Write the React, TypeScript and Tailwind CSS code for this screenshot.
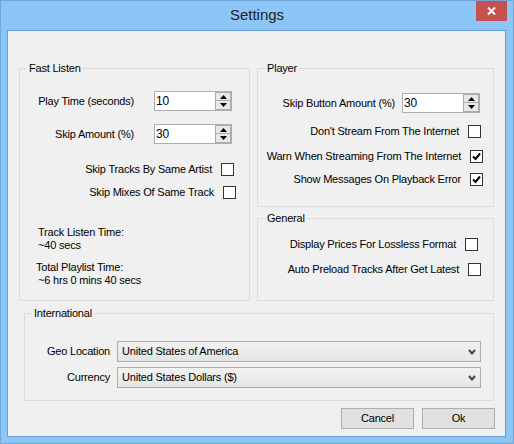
import React from 'react';

function CheckBox({ checked = false }: { checked?: boolean }) {
  return (
    <span className="flex h-[13px] w-[13px] shrink-0 items-center justify-center border border-[#333333] bg-white">
      {checked && (
        <svg width="11" height="11" viewBox="0 0 11 11">
          <path d="M2 5.5 L4.5 8 L9 2.5" fill="none" stroke="#000" strokeWidth="2" />
        </svg>
      )}
    </span>
  );
}

function SpinBox({ value }: { value: string }) {
  return (
    <div className="flex h-[20px] w-[78px] border border-[#abadb3] bg-white">
      <div className="flex-1 pl-[1px] text-[12px] leading-[18px]">{value}</div>
      <div className="flex w-[16px] flex-col">
        <div className="flex h-[9px] items-center justify-center border border-[#acacac] bg-[#e8e8e8]">
          <svg width="7" height="4" viewBox="0 0 7 4">
            <path d="M0 4 L3.5 0 L7 4 Z" fill="#000" />
          </svg>
        </div>
        <div className="flex h-[9px] items-center justify-center border border-t-0 border-[#acacac] bg-[#e8e8e8]">
          <svg width="7" height="4" viewBox="0 0 7 4">
            <path d="M0 0 L3.5 4 L7 0 Z" fill="#000" />
          </svg>
        </div>
      </div>
    </div>
  );
}

function Select({ value }: { value: string }) {
  return (
    <div className="flex h-[21px] w-[364px] items-center justify-between border border-[#acacac] bg-gradient-to-b from-[#f2f2f2] to-[#e5e5e5] pl-[4px] pr-[4px]">
      <span>{value}</span>
      <svg width="8" height="6" viewBox="0 0 8 6">
        <path d="M1 1 L4 4.5 L7 1" fill="none" stroke="#444" strokeWidth="2" />
      </svg>
    </div>
  );
}

function Group({ title, className, children }: { title: string; className: string; children: React.ReactNode }) {
  return (
    <div className={`relative border border-[#dcdcdc] ${className}`}>
      <span className="absolute -top-[8px] left-[7px] bg-[#f0f0f0] px-[2px] leading-[15px]">{title}</span>
      {children}
    </div>
  );
}

function CheckRow({ label, width, checked, className = '' }: { label: string; width: string; checked?: boolean; className?: string }) {
  return (
    <div className={`flex h-[13px] items-center justify-end ${width} ${className}`}>
      <span className="mr-[9px] whitespace-nowrap leading-[15px]">{label}</span>
      <CheckBox checked={checked} />
    </div>
  );
}

export default function App() {
  return (
    <div className="flex h-[444px] w-[514px] flex-col border border-[#6fa6d6] bg-[#8bc6f7] font-['Liberation_Sans',sans-serif] text-[11px] tracking-[-0.2px] text-black">
      <div className="relative flex h-[29px] shrink-0 items-center justify-center">
        <span className="text-[15px] tracking-normal text-[#222]">Settings</span>
        <div className="absolute right-[6px] top-0 flex h-[20px] w-[31px] items-center justify-center bg-[#c75050]">
          <svg width="9" height="8" viewBox="0 0 9 8">
            <path d="M1 0.5 L8 7.5 M8 0.5 L1 7.5" stroke="#fff" strokeWidth="2" />
          </svg>
        </div>
      </div>

      <div className="mb-[6px] ml-[6px] mr-[7px] flex-1 border border-[#6b9fcf] bg-[#f0f0f0] pl-[11px] pt-[37px]">
        <div className="flex gap-[7px]">
          <Group title="Fast Listen" className="h-[233px] w-[231px]">
            <div className="mt-[22px] flex h-[20px] items-center">
              <span className="w-[114px] text-right leading-[15px]">Play Time (seconds)</span>
              <span className="ml-[20px]">
                <SpinBox value="10" />
              </span>
            </div>
            <div className="mt-[13px] flex h-[20px] items-center">
              <span className="w-[114px] text-right leading-[15px]">Skip Amount (%)</span>
              <span className="ml-[20px]">
                <SpinBox value="30" />
              </span>
            </div>
            <CheckRow label="Skip Tracks By Same Artist" width="w-[214px]" className="mt-[19px]" />
            <CheckRow label="Skip Mixes Of Same Track" width="w-[216px]" className="mt-[10px]" />
            <div className="ml-[18px] mt-[27px] leading-[13px]">
              <div>Track Listen Time:</div>
              <div>~40 secs</div>
            </div>
            <div className="ml-[16px] mt-[9px] leading-[13px]">
              <div>Total Playlist Time:</div>
              <div className="ml-[2px]">~6 hrs 0 mins 40 secs</div>
            </div>
          </Group>

          <div className="flex flex-col gap-[11px]">
            <Group title="Player" className="h-[139px] w-[237px]">
              <div className="mt-[24px] flex h-[20px] items-center">
                <span className="w-[137px] whitespace-nowrap text-right leading-[15px]">Skip Button Amount (%)</span>
                <span className="ml-[7px]">
                  <SpinBox value="30" />
                </span>
              </div>
              <CheckRow label="Don't Stream From The Internet" width="w-[223px]" className="mt-[12px]" />
              <CheckRow label="Warn When Streaming From The Internet" width="w-[225px]" checked className="mt-[12px]" />
              <CheckRow label="Show Messages On Playback Error" width="w-[225px]" checked className="mt-[10px]" />
            </Group>
            <Group title="General" className="h-[83px] w-[237px]">
              <CheckRow label="Display Prices For Lossless Format" width="w-[220px]" className="mt-[19px]" />
              <CheckRow label="Auto Preload Tracks After Get Latest" width="w-[223px]" className="mt-[12px]" />
            </Group>
          </div>
        </div>

        <Group title="International" className="ml-[5px] mt-[12px] h-[88px] w-[470px]">
          <div className="mt-[27px] flex items-center">
            <span className="w-[85px] text-right leading-[15px]">Geo Location</span>
            <span className="ml-[7px]">
              <Select value="United States of America" />
            </span>
          </div>
          <div className="mt-[5px] flex items-center">
            <span className="w-[85px] text-right leading-[15px]">Currency</span>
            <span className="ml-[7px]">
              <Select value="United States Dollars ($)" />
            </span>
          </div>
        </Group>

        <div className="mr-[10px] mt-[7px] flex justify-end gap-[8px]">
          <button className="h-[21px] w-[73px] border border-[#adadad] bg-[#e1e1e1]">Cancel</button>
          <button className="h-[21px] w-[73px] border border-[#adadad] bg-[#e1e1e1]">Ok</button>
        </div>
      </div>
    </div>
  );
}
